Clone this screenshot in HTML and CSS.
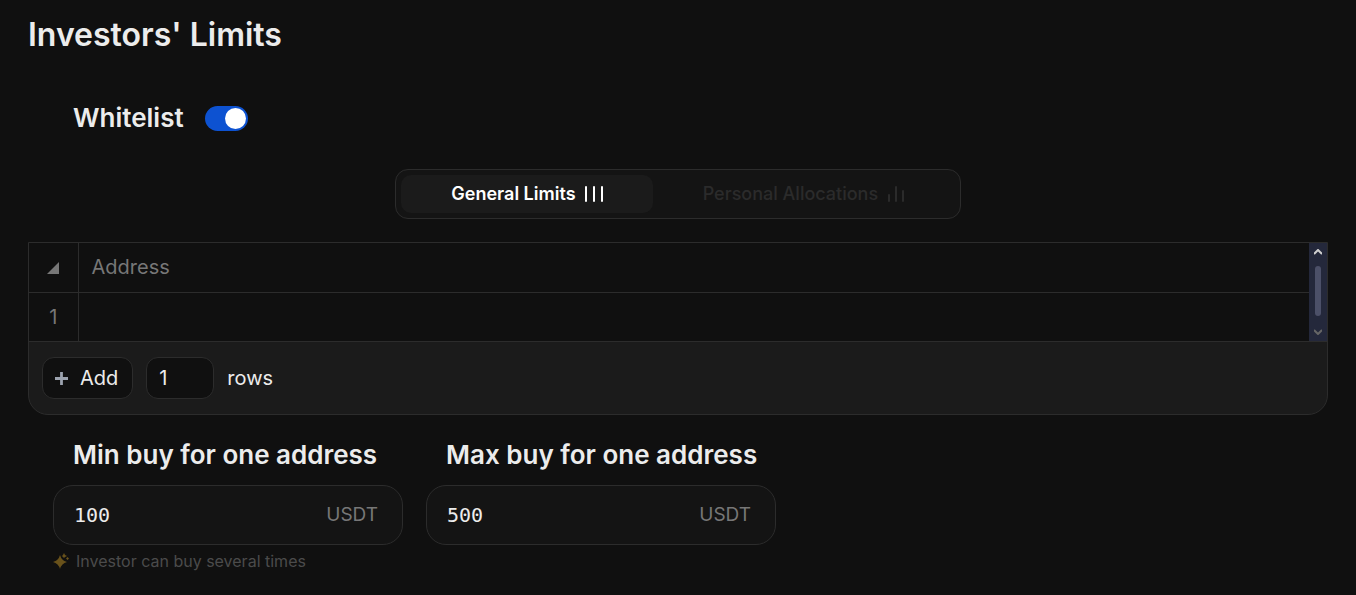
FILE: index.html
```
<!DOCTYPE html>
<html lang="en">
<head>
<meta charset="utf-8">
<meta name="viewport" content="width=device-width, initial-scale=1">
<title>Investors' Limits</title>
<link rel="stylesheet" href="styles.css">
</head>
<body>
<main class="page">
  <h1 class="title">Investors' Limits</h1>

  <div class="whitelist">
    <label class="heading" for="whitelist">Whitelist</label>
    <input class="switch" type="checkbox" role="switch" id="whitelist" checked>
  </div>

  <div class="tabs" role="tablist">
    <button class="tab tab-active" type="button" role="tab" aria-selected="true">General Limits
      <svg class="bars" viewBox="0 0 18 18" aria-hidden="true"><path d="M1 2V16M9 2V16M17 2V16"/></svg>
    </button>
    <button class="tab" type="button" role="tab" aria-selected="false">Personal Allocations
      <svg class="bars" viewBox="0 0 18 18" aria-hidden="true"><path d="M2 10V16M9 2V16M16 6V16"/></svg>
    </button>
  </div>

  <section class="sheet">
    <div class="grid">
      <table class="table">
        <thead>
          <tr>
            <th class="gutter"><svg class="corner" viewBox="0 0 12 12" aria-hidden="true"><path d="M12 0V12H0Z"/></svg></th>
            <th class="address">Address</th>
          </tr>
        </thead>
        <tbody>
          <tr><td class="gutter">1</td><td></td></tr>
        </tbody>
      </table>
      <div class="scrollbar">
        <button class="arrow" type="button" aria-label="Scroll up"><svg viewBox="0 0 8 6" aria-hidden="true"><path d="M0 5L4 1L8 5"/></svg></button>
        <div class="thumb"></div>
        <button class="arrow arrow-down" type="button" aria-label="Scroll down"><svg viewBox="0 0 8 6" aria-hidden="true"><path d="M0 1L4 5L8 1"/></svg></button>
      </div>
    </div>
    <div class="sheet-footer">
      <button class="add" type="button"><svg class="plus" viewBox="0 0 14 14" aria-hidden="true"><path d="M7 0V14M0 7H14"/></svg>Add</button>
      <input class="count" id="rows" type="text" inputmode="numeric" value="1">
      <label for="rows">rows</label>
    </div>
  </section>

  <div class="fields">
    <div class="field">
      <label class="heading" for="min-buy">Min buy for one address</label>
      <div class="box"><input class="amount" id="min-buy" type="text" inputmode="decimal" value="100"><span class="unit">USDT</span></div>
      <p class="hint"><svg class="spark" viewBox="0 0 16 16" aria-hidden="true"><path d="M7 2Q8.500 7.500 14 9Q8.500 10.500 7 16Q5.500 10.500 0 9Q5.500 7.500 7 2ZM11 0L12 2L14 3L12 4L11 5L10 4L9 3L10 2ZM14.500 4L16 5.500L14.500 7L13 5.500Z"/></svg>Investor can buy several times</p>
    </div>
    <div class="field">
      <label class="heading" for="max-buy">Max buy for one address</label>
      <div class="box"><input class="amount" id="max-buy" type="text" inputmode="decimal" value="500"><span class="unit">USDT</span></div>
    </div>
  </div>
</main>
</body>
</html>
```
FILE: styles.css
```
* { box-sizing: border-box; }
body { margin: 0; background: #101010; color: #ececec; font: 20px/28px Inter, sans-serif; }
button, input { font: inherit; color: inherit; margin: 0; }
button { cursor: pointer; }
svg { flex: none; }

.page { padding: 15px 28px; }
.title { margin: 0; font-size: 32px; line-height: 40px; font-weight: 600; }
.heading { font-size: 26px; line-height: 32px; font-weight: 600; }

.whitelist { display: flex; align-items: center; gap: 21px; margin-top: 47px; padding-left: 45px; }
.switch { appearance: none; display: flex; align-items: center; justify-content: flex-end; width: 43px; height: 25px; padding: 0 2px; border-radius: 13px; background: #0d52d1; }
.switch::before { content: ""; width: 21px; height: 21px; border-radius: 50%; background: #fff; }
.switch:not(:checked) { justify-content: flex-start; background: #333; }

.tabs { display: grid; grid-template-columns: 5fr 6fr; max-width: 566px; margin: 35px auto 0; padding: 5px; border: 1px solid #2c2c2c; border-radius: 13px; background: #141414; }
.tab { display: flex; align-items: center; justify-content: center; gap: 9px; height: 38px; padding: 0; border: 0; border-radius: 10px; background: none; color: #2b2b2b; font-size: 18px; font-weight: 500; white-space: nowrap; }
.tab-active { background: #1b1b1b; color: #fff; font-weight: 600; }
.bars { width: 18px; height: 18px; fill: none; stroke: currentColor; stroke-width: 2; stroke-linecap: round; }

.sheet { margin-top: 23px; border: 1px solid #2c2c2c; border-radius: 0 0 20px 20px; background: #1b1b1b; overflow: hidden; }
.grid { display: flex; border-bottom: 1px solid #2c2c2c; }
.table { flex: 1; border-collapse: collapse; background: #101010; color: #777; }
.table th, .table td { height: 49px; padding: 0; font-weight: 400; }
.table tbody tr { border-top: 1px solid #2c2c2c; }
.table .gutter { width: 49px; border-right: 1px solid #2c2c2c; text-align: center; }
.table .address { padding-left: 13px; text-align: left; }
.corner { width: 12px; height: 12px; fill: #777; }
.scrollbar { display: flex; flex-direction: column; align-items: center; width: 18px; background: #24283b; }
.arrow { display: flex; align-items: center; justify-content: center; width: 18px; height: 18px; padding: 0; border: 0; background: none; color: #d0d0d0; }
.arrow svg { width: 8px; height: 6px; fill: none; stroke: currentColor; stroke-width: 2; }
.arrow-down { margin-top: auto; color: #666; }
.thumb { width: 6px; height: 50px; margin-top: 5px; border-radius: 3px; background: #4c5068; }
.sheet-footer { display: flex; align-items: center; gap: 13px; padding: 15px 13px; }
.add, .count { height: 42px; border: 1px solid #2c2c2c; border-radius: 12px; background: #101010; }
.add { display: flex; align-items: center; gap: 12px; padding: 0 14px 0 12px; }
.plus { width: 13px; height: 13px; stroke: #9ca3af; stroke-width: 3; }
.count { width: 68px; padding: 0 12px; }

.fields { display: flex; flex-wrap: wrap; gap: 23px; margin-top: 24px; padding-left: 25px; }
.field { flex: 0 1 350px; min-width: 0; }
.field .heading { display: block; padding-left: 20px; white-space: nowrap; }
.box { display: flex; align-items: center; height: 60px; margin-top: 14px; padding: 0 24px 0 20px; border: 1px solid #2c2c2c; border-radius: 20px; background: #141414; }
.amount { flex: 1; min-width: 0; padding: 0; border: 0; background: none; font-family: "DejaVu Sans Mono", monospace; }
.unit { color: #777; font-size: 19px; }
.hint { display: flex; align-items: center; gap: 7px; margin: 6px 0 0; color: #4b4b4b; font-size: 16px; line-height: 20px; font-weight: 400; }
.spark { width: 16px; height: 16px; fill: #69521b; }
```
